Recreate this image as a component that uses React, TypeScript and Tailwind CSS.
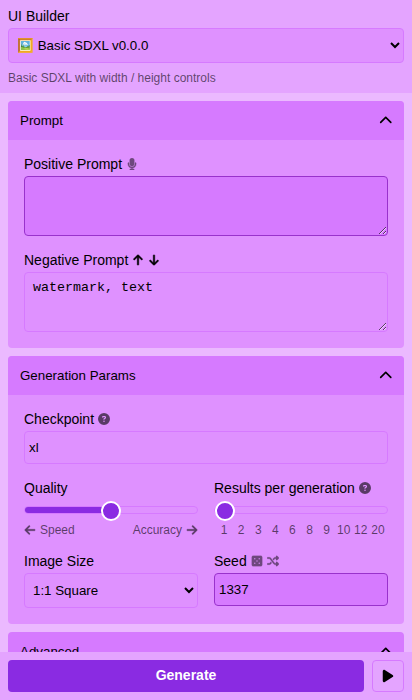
import type { ReactNode } from "react";
import {
  FaArrowDown,
  FaArrowLeft,
  FaArrowRight,
  FaArrowUp,
  FaChevronUp,
  FaCircleQuestion,
  FaDiceFive,
  FaMicrophone,
  FaPlay,
  FaShuffle,
} from "react-icons/fa6";

function Panel({ title, children }: { title: string; children?: ReactNode }) {
  return (
    <section className="shrink-0 overflow-hidden rounded bg-[#df91ff]">
      <div className="flex h-[39px] items-center justify-between bg-[#d67aff] px-3 text-[13.333px]">
        <span>{title}</span>
        <FaChevronUp className="size-[13.5px]" />
      </div>
      {children}
    </section>
  );
}

function Label({ children }: { children: ReactNode }) {
  return <div className="flex h-4 items-center text-[14px] leading-4">{children}</div>;
}

function Slider({ value }: { value: number }) {
  return (
    <div className="relative mt-[10px] h-2 rounded-full border border-[#d67aff]">
      <div className="h-full rounded-full bg-[#8a2be2]" style={{ width: `${value}%` }} />
      <div
        className="absolute -top-[6px] size-5 rounded-full border-2 border-white bg-[#8a2be2]"
        style={{ left: `calc((100% - 20px) * ${value / 100})` }}
      />
    </div>
  );
}

const counts = [1, 2, 3, 4, 6, 8, 9, 10, 12, 20];

export default function App() {
  return (
    <div className="flex h-[700px] w-[412px] flex-col overflow-hidden bg-[#ebb9ff] font-['Liberation_Sans',Arial,sans-serif] text-black">
      <header className="h-[93px] shrink-0 bg-[#e4a4ff] px-2 pt-2">
        <Label>UI Builder</Label>
        <select className="mt-1 block h-[35px] w-full rounded border border-[#d67aff] bg-[#df91ff] px-1 text-[13.333px]">
          <option>🖼️ Basic SDXL v0.0.0</option>
        </select>
        <p className="mt-2 text-[12px] leading-[14px] text-black/60">Basic SDXL with width / height controls</p>
      </header>

      <main className="flex min-h-0 flex-1 flex-col gap-2 overflow-hidden px-2 pt-2">
        <Panel title="Prompt">
          <div className="px-4 pt-4 pb-4">
            <Label>
              Positive Prompt
              <FaMicrophone className="ml-1 size-3 stroke-black stroke-[14px] opacity-50" />
            </Label>
            <textarea className="mt-1 block h-[60px] w-full resize rounded border border-[#9932cc] bg-[#d67aff] p-2 font-['Liberation_Mono',monospace] text-[13.333px] leading-[15px]" />
            <div className="mt-4">
              <Label>
                Negative Prompt
                <FaArrowUp className="ml-1 size-3 stroke-black stroke-[20px]" />
                <FaArrowDown className="ml-1 size-3 stroke-black stroke-[20px]" />
              </Label>
            </div>
            <textarea
              defaultValue="watermark, text"
              className="mt-1 block h-[60px] w-full resize rounded border border-[#d67aff] bg-transparent px-2 pt-[7px] font-['Liberation_Mono',monospace] text-[13.333px] leading-[15px]"
            />
          </div>
        </Panel>

        <Panel title="Generation Params">
          <div className="px-4 pt-4 pb-4">
            <Label>
              Checkpoint
              <FaCircleQuestion className="ml-1 size-3 text-black/60" />
            </Label>
            <input
              defaultValue="xl"
              className="mt-1 block h-[33px] w-full rounded border border-[#d67aff] px-1 text-[13.333px]"
            />
            <div className="mt-4 grid grid-cols-2 gap-x-4">
              <div>
                <Label>Quality</Label>
                <Slider value={50} />
                <div className="mt-[9px] flex justify-between text-[12px] leading-[14px] text-black/60">
                  <span className="flex items-center gap-1">
                    <FaArrowLeft className="stroke-black stroke-[14px] text-black opacity-60" />
                    Speed
                  </span>
                  <span className="flex items-center gap-1">
                    Accuracy
                    <FaArrowRight className="stroke-black stroke-[14px] text-black opacity-60" />
                  </span>
                </div>
              </div>
              <div>
                <Label>
                  Results per generation
                  <FaCircleQuestion className="ml-1 size-3 text-black/60" />
                </Label>
                <Slider value={0} />
                <div className="mt-[9px] flex px-[1.5px] text-[12px] leading-[14px] text-black/60">
                  {counts.map((n) => (
                    <span key={n} className="flex w-0 flex-1 justify-center">
                      {n}
                    </span>
                  ))}
                </div>
              </div>
            </div>
            <div className="mt-4 grid grid-cols-2 gap-x-4">
              <div>
                <Label>Image Size</Label>
                <select className="mt-1 block h-[35px] w-full rounded border border-[#d67aff] bg-[#df91ff] px-1 text-[13.333px]">
                  <option>1:1 Square</option>
                </select>
              </div>
              <div>
                <Label>
                  Seed
                  <FaDiceFive className="ml-1 size-3 stroke-black stroke-[8px] opacity-50" />
                  <FaShuffle className="ml-1 size-3 stroke-black stroke-[10px] opacity-50" />
                </Label>
                <input
                  defaultValue="1337"
                  className="mt-1 block h-[33px] w-full rounded border border-[#9932cc] bg-[#d67aff] px-1 text-[13.333px]"
                />
              </div>
            </div>
          </div>
        </Panel>

        <Panel title="Advanced" />
      </main>

      <footer className="flex h-12 shrink-0 gap-2 bg-[#e4a4ff] p-2">
        <button className="flex-1 rounded bg-[#8a2be2] pb-[2px] text-[14px] leading-4 font-bold text-white">Generate</button>
        <button className="flex w-8 items-center justify-center rounded border border-[#d67aff]">
          <FaPlay className="size-[14px]" />
        </button>
      </footer>
    </div>
  );
}
